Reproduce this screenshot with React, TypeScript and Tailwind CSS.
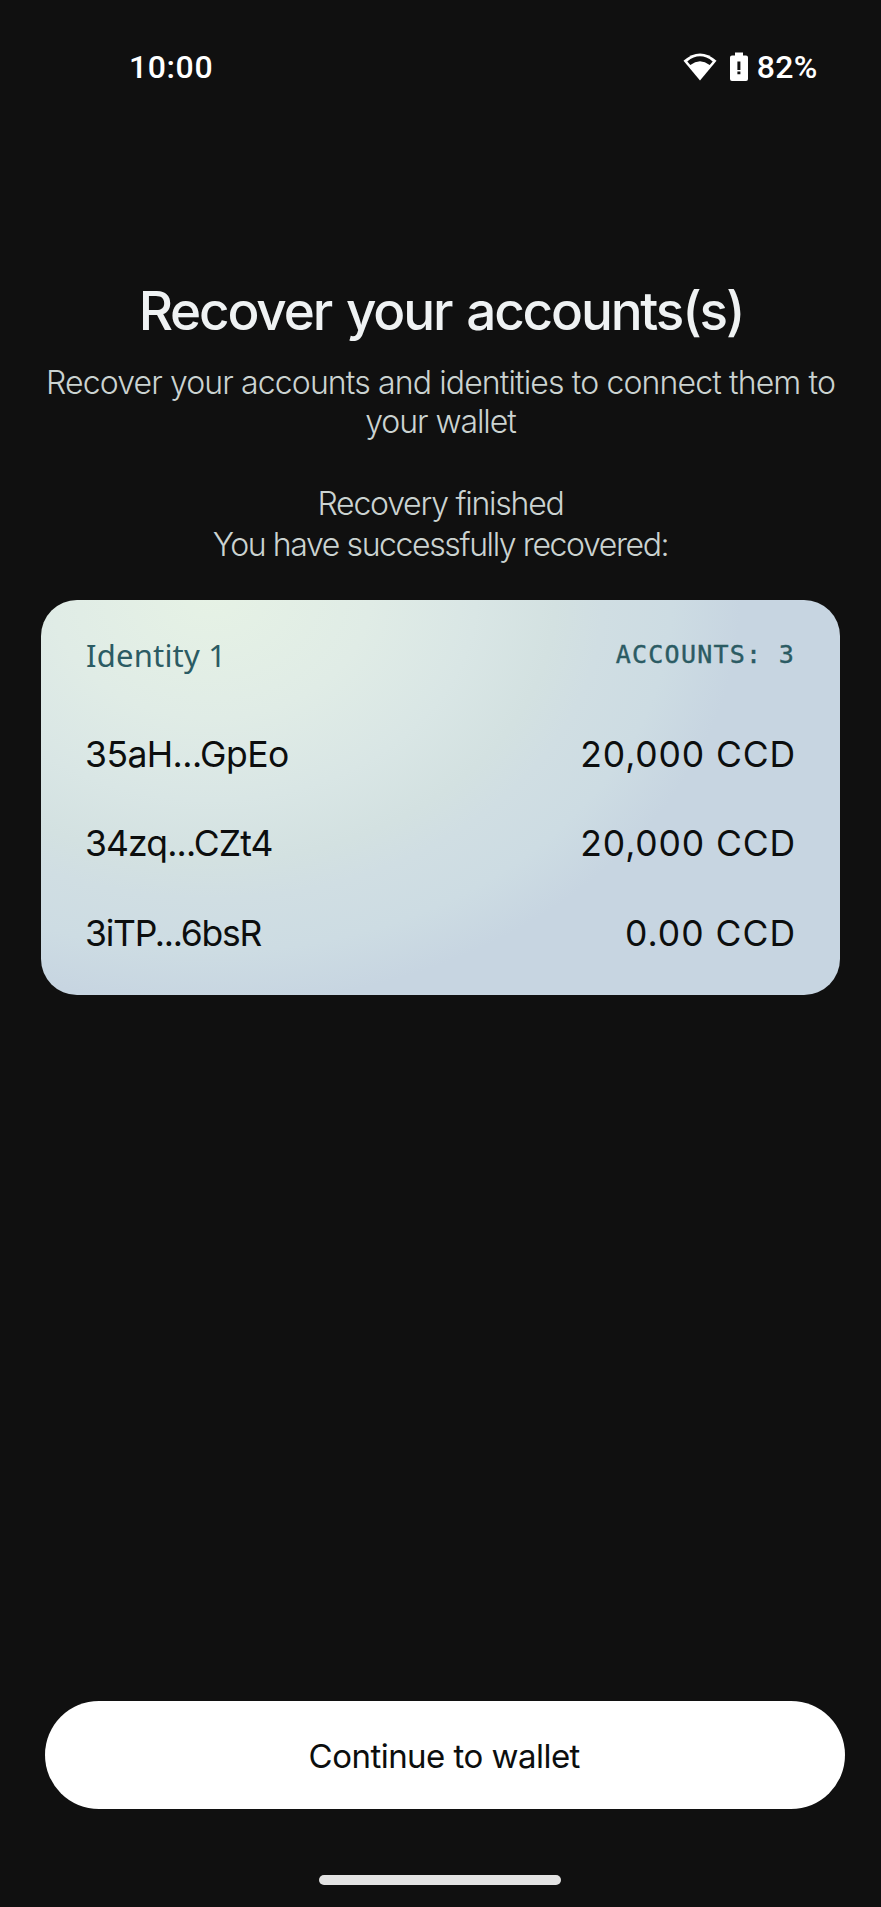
const accounts = [
  { address: "35aH...GpEo", balance: "20,000 CCD", addressClass: "tracking-[-0.55px]", balanceClass: "tracking-[0.86px]" },
  { address: "34zq...CZt4", balance: "20,000 CCD", addressClass: "tracking-[-0.87px]", balanceClass: "tracking-[0.86px]" },
  { address: "3iTP...6bsR", balance: "0.00 CCD", addressClass: "tracking-[-1.27px]", balanceClass: "tracking-[1px]" },
];

function WifiIcon() {
  return (
    <svg className="h-[30px] w-[34px]" viewBox="0 0 34 30" fill="none">
      <path d="M0.5 8.8Q17 -6 33.5 8.8L17 28.5Z" fill="#fff" />
      <path d="M4.3 9.4Q17 -0.8 29.7 9.4L26.7 13Q17 5.6 7.3 13Z" fill="#101010" />
    </svg>
  );
}

function BatteryIcon() {
  return (
    <svg className="h-[30px] w-[18px]" viewBox="0 0 18 30">
      <path d="M5 0.5H13V3.5H16Q18 3.5 18 5.5V27Q18 29 16 29H2Q0 29 0 27V5.5Q0 3.5 2 3.5H5Z" fill="#fff" />
      <path d="M7.4 9.5H10.4V18H7.4ZM7.4 19.5H10.4V22.3H7.4Z" fill="#101010" />
    </svg>
  );
}

export default function App() {
  return (
    <div className="flex h-[1907px] w-[881px] flex-col overflow-hidden bg-[#101010] font-['Inter',sans-serif]">
      <header className="flex h-[136px] shrink-0 items-start justify-between pt-[47px] pr-[63.5px] pl-[129px] font-['Roboto',sans-serif] text-[32px] leading-[40px] font-medium text-white">
        <span className="tracking-[0.6px]">10:00</span>
        <div className="flex items-start">
          <div className="flex pt-[5px]">
            <WifiIcon />
            <div className="ml-[13px]">
              <BatteryIcon />
            </div>
          </div>
          <span className="ml-[9px] tracking-[0.3px]">82%</span>
        </div>
      </header>

      <main className="flex flex-col pt-[142.5px]">
        <h1 className="pl-[1px] text-center text-[53px] leading-[64px] font-medium tracking-[-2.15px] [word-spacing:3px] whitespace-nowrap text-[#eff2f3]">
          Recover your accounts(s)
        </h1>
        <p className="mt-[20.5px] text-center text-[32px] leading-[39px] font-light whitespace-nowrap text-[#cbd3d1]">
          <span className="tracking-[-0.87px]">Recover your accounts and identities to connect them to</span>
          <br />
          <span className="tracking-[-1.06px]">your wallet</span>
        </p>
        <p className="mt-[42px] text-center text-[32px] leading-[41px] font-light whitespace-nowrap text-[#cbd3d1]">
          <span className="tracking-[-1.24px]">Recovery finished</span>
          <br />
          <span className="tracking-[-1.39px]">You have successfully recovered:</span>
        </p>

        <section className="mt-[34.5px] mr-[41px] ml-[40.5px] h-[395.5px] rounded-[36px] bg-[radial-gradient(530px_410px_at_170px_-5px,#e6f2e5_0%,#e0ece6_30%,#d9e6e5_50%,#d3e1e1_65%,#d0dee3_74%,#cddce3_87%,#c7d5e1_100%)] pt-[35.5px] pr-[44px] pl-[44.5px]">
          <div className="flex h-[40px] items-start justify-between pr-px pl-px leading-[40px] text-[#2b5b63]">
            <h2 className="font-['Noto_Sans',sans-serif] text-[31px] font-normal tracking-[0.2px]">Identity 1</h2>
            <span className="font-['DejaVu_Sans_Mono',monospace] text-[25px] tracking-[1.25px] [-webkit-text-stroke:0.4px_#2b5b63]">ACCOUNTS: 3</span>
          </div>
          <ul className="mt-[34.5px] text-[35.5px] leading-[89.7px] text-[#0c0e0e]">
            {accounts.map((a) => (
              <li key={a.address} className="flex h-[89.7px] justify-between">
                <span className={a.addressClass}>{a.address}</span>
                <span className={a.balanceClass}>{a.balance}</span>
              </li>
            ))}
          </ul>
        </section>
      </main>

      <footer className="mt-auto flex flex-col pb-[22px]">
        <button className="mr-[36px] ml-[44.5px] h-[108px] rounded-[54px] bg-white pt-[4px] pr-px text-[33px] tracking-[-0.53px] text-[#0c0e0e]">
          Continue to wallet
        </button>
        <div className="ml-[319px] mt-[66.5px] h-[10px] w-[242px] rounded-full bg-[#e3e3e3]" />
      </footer>
    </div>
  );
}
